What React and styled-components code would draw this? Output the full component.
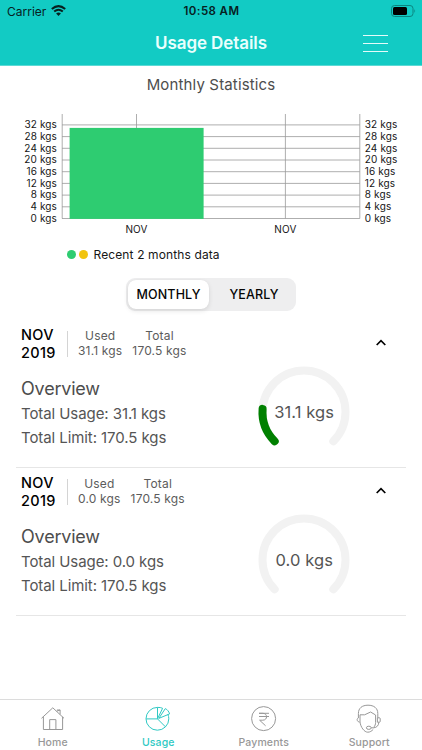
import React from "react";
import styled, { createGlobalStyle } from "styled-components";

const GlobalStyle = createGlobalStyle`
  * { box-sizing: border-box; }
  body { margin: 0; background: #fff; }
  button { font: inherit; letter-spacing: inherit; border: 0; padding: 0; margin: 0; background: none; color: inherit; }
`;

const Screen = styled.div`
  width: 422px;
  height: 750px;
  display: flex;
  flex-direction: column;
  overflow: hidden;
  background: #fff;
  color: #4d4d4d;
  font-family: Inter, "Liberation Sans", sans-serif;
`;

const Header = styled.header`
  height: 66px;
  flex: none;
  background: #12cbc4;
  border-bottom: 1px solid #5cdad5;
`;

const StatusBar = styled.div`
  height: 22px;
  display: grid;
  grid-template-columns: 1fr auto 1fr;
  align-items: center;
  padding: 0 6px 0 7px;
  color: #07211f;
  font-size: 12px;
`;

const Carrier = styled.div`
  display: flex;
  align-items: center;
  gap: 5px;
  letter-spacing: 0;
  svg { display: block; margin-top: -2px; }
`;

const Clock = styled.time`
  font-weight: 600;
  font-size: 11.5px;
  letter-spacing: 0.4px;
`;

const Battery = styled.svg`
  justify-self: end;
  margin-top: -1px;
`;

const NavBar = styled.div`
  height: 43px;
  display: grid;
  grid-template-columns: 1fr auto 1fr;
  align-items: center;
  padding-right: 34px;
  padding-left: 34px;
`;

const NavTitle = styled.h1`
  grid-column: 2;
  margin: -1px 0 0;
  font-size: 17px;
  font-weight: 600;
  letter-spacing: -0.08px;
  color: #e9fffd;
`;

const MenuButton = styled.button`
  justify-self: end;
  width: 25px;
  height: 17px;
  display: flex;
  flex-direction: column;
  justify-content: space-between;
`;

const MenuLine = styled.span`
  height: 1px;
  width: 25px;
  background: #e4fbfa;
`;

const Main = styled.main`
  flex: 1;
  display: flex;
  flex-direction: column;
`;

const ChartTitle = styled.h2`
  margin: 9px 0 0;
  height: 20px;
  line-height: 20px;
  text-align: center;
  font-size: 15px;
  font-weight: 400;
  letter-spacing: 0.15px;
`;

const Chart = styled.svg`
  display: block;
  flex: none;
  margin-top: 10px;
`;

const ChartText = styled.text`
  font-size: 10px;
  fill: #161616;
  letter-spacing: 0.13px;
`;

const Legend = styled.div`
  height: 20px;
  margin-top: 4px;
  padding-left: 67px;
  display: flex;
  align-items: center;
  gap: 3px;
  font-size: 12px;
  letter-spacing: 0.12px;
  color: #161616;
`;

const Dot = styled.span`
  width: 9px;
  height: 9px;
  border-radius: 50%;
  background: ${(p) => p.$color};
`;

const LegendLabel = styled.span`
  margin-left: 2.5px;
`;

const Segmented = styled.div`
  width: 170px;
  height: 33px;
  margin: 14px 0 0 126px;
  padding: 2px;
  display: grid;
  grid-template-columns: 81px 1fr;
  column-gap: 5px;
  border-radius: 9px;
  background: #eeeeef;
`;

const Segment = styled.button`
  border-radius: 8px;
  font-size: 12.5px;
  font-weight: 500;
  letter-spacing: 0.15px;
  color: #050505;
  background: ${(p) => (p.$active ? "#fff" : "transparent")};
  box-shadow: ${(p) => (p.$active ? "0 2px 5px rgba(0,0,0,.1), 0 0 1px rgba(0,0,0,.08)" : "none")};
`;

const Entries = styled.div`
  margin: 9px 16px 0;
`;

const Entry = styled.section`
  height: 148px;
  border-bottom: 1px solid #e6e6e6;
  padding: 5px 5px 0;
`;

const EntryHeader = styled.div`
  height: 38px;
  display: flex;
  align-items: center;
`;

const Period = styled.div`
  width: 47px;
  border-right: 1px solid #d4d4d4;
  height: 26px;
  display: flex;
  flex-direction: column;
  justify-content: center;
  line-height: 18px;
  font-size: 14.5px;
  font-weight: 500;
  letter-spacing: 0.3px;
  color: #000;
`;

const Stat = styled.div`
  margin: -1px 0 0 10px;
  text-align: center;
  font-size: 12px;
  line-height: 14.5px;
  letter-spacing: 0.17px;
  color: #5c5c5c;
`;

const Toggle = styled.button`
  margin: -3px 15px 0 auto;
  display: flex;
`;

const EntryBody = styled.div`
  display: flex;
  justify-content: space-between;
  padding-right: 50px;
`;

const Details = styled.div`
  padding-top: 12px;
  font-size: 15px;
  line-height: 23.5px;
  letter-spacing: -0.08px;
  color: #555;
`;

const Overview = styled.h3`
  margin: 0;
  font-size: 18px;
  line-height: 27px;
  font-weight: 400;
  letter-spacing: -0.2px;
  color: #4d4d4d;
`;

const Line = styled.div`
  white-space: nowrap;
`;

const GaugeSvg = styled.svg`
  display: block;
  margin-top: 2px;
`;

const GaugeText = styled.text`
  font-size: 16.5px;
  letter-spacing: 0.1px;
  fill: #555;
  text-anchor: middle;
`;

const TabBar = styled.nav`
  height: 51px;
  flex: none;
  display: grid;
  grid-template-columns: repeat(4, 1fr);
  border-top: 1px solid #dcdcdc;
`;

const Tab = styled.button`
  display: flex;
  flex-direction: column;
  align-items: center;
  padding-top: 4px;
  color: ${(p) => (p.$active ? "#2fc9c4" : "#989898")};
  font-size: 10.5px;
  font-weight: 500;
  letter-spacing: 0.12px;
  line-height: 14px;
  svg { display: block; fill: none; stroke: currentColor; stroke-width: 1; margin-bottom: 2px; }
`;

const TICKS = [32, 28, 24, 20, 16, 12, 8, 4, 0];
const AXIS_BOTTOM = 113.5;
const STEP = 11.7;

function UsageChart() {
  const y = (v) => AXIS_BOTTOM - (v / 4) * STEP;
  return (
    <Chart width="422" height="135" viewBox="0 0 422 135">
      <g stroke="#999" strokeWidth="0.8">
        {TICKS.map((v) => <line key={v} x1="62" x2="359.8" y1={y(v)} y2={y(v)} />)}
        {[62.2, 136.5, 285.4, 359.8].map((x) => <line key={x} x1={x} x2={x} y1="9" y2={AXIS_BOTTOM} />)}
      </g>
      <rect x="69.6" y="22.9" width="134" height="91" fill="#2ecc71" />
      {TICKS.map((v) => (
        <g key={v}>
          <ChartText x="57" y={y(v) + 3.3} textAnchor="end">{v} kgs</ChartText>
          <ChartText x="364.8" y={y(v) + 3.3}>{v} kgs</ChartText>
        </g>
      ))}
      <ChartText x="136.5" y="128.4" textAnchor="middle">NOV</ChartText>
      <ChartText x="285.4" y="128.4" textAnchor="middle">NOV</ChartText>
    </Chart>
  );
}

function Gauge({ value, limit }) {
  const arc = "M17.7 76.3 A41.5 41.5 0 1 1 76.3 76.3";
  return (
    <GaugeSvg width="94" height="94" viewBox="0 0 94 94" fill="none" strokeLinecap="round" strokeWidth="8">
      <path d={arc} stroke="#f2f2f2" />
      {value > 0 && <path d={arc} stroke="#008000" pathLength="100" strokeDasharray={`${(value / limit) * 100} 200`} />}
      <GaugeText x="47.2" y="53">{value.toFixed(1)} kgs</GaugeText>
    </GaugeSvg>
  );
}

function UsageEntry({ month, year, used, total }) {
  return (
    <Entry>
      <EntryHeader>
        <Period><span>{month}</span><span>{year}</span></Period>
        <Stat>Used<br />{used.toFixed(1)} kgs</Stat>
        <Stat>Total<br />{total} kgs</Stat>
        <Toggle aria-label="Collapse">
          <svg width="10" height="7" viewBox="0 0 10 7" fill="none" stroke="#000" strokeWidth="1.7"><path d="M.7 6 5 1.7 9.3 6" /></svg>
        </Toggle>
      </EntryHeader>
      <EntryBody>
        <Details>
          <Overview>Overview</Overview>
          <Line>Total Usage: {used.toFixed(1)} kgs</Line>
          <Line>Total Limit: {total} kgs</Line>
        </Details>
        <Gauge value={used} limit={total} />
      </EntryBody>
    </Entry>
  );
}

const HomeIcon = () => (
  <svg width="28" height="30" viewBox="0 0 28 30">
    <path d="M2.5 14.3 13.8 3.8 25 14.3M4.4 12.8v12.7h19.2V12.8M10.7 25.5V15.6h6.2v9.9M17.7 7.2l3.4-1.2v4.4M17.9 6h3.2" />
  </svg>
);
const UsageIcon = () => (
  <svg width="28" height="30" viewBox="0 0 28 30">
    <path d="M13.5 3.4A11.4 11.4 0 1 0 24.8 14.8C24.8 13.2 24.5 11.7 23.9 10.4M13.5 3.4V14.9H2.1M13.5 14.9 21.5 22.9M14.8 14.4 25.6 9.9C24.9 7.5 23.4 5.6 21.3 4.6ZM13.8 14.2 18.6 4.3C17.2 3.6 15.5 3.3 13.5 3.4" />
  </svg>
);
const PaymentsIcon = () => (
  <svg width="28" height="30" viewBox="0 0 28 30">
    <circle cx="13.6" cy="14.6" r="12" />
    <path d="M9 9.3h10M9 12.5h10M9 9.3h3.8c5 0 5 6.9 0 6.9H9.6l6 5.6" />
  </svg>
);
const SupportIcon = () => (
  <svg width="28" height="30" viewBox="0 0 28 30">
    <path d="M3.4 14V9.5C3.4 4.2 7 1.2 13 1.2S22.8 4.2 22.8 9.5V14M3.4 14c-2 .4-1.6 3.8 1.2 4.2M22.8 13.8h1.6q.8 0 .8.8v2.8q0 .8-.8.8h-2v-4.4M5 14v-3.2h4.6L15.6 8l5 3v7.5c0 1.8-.7 3.4-1.8 4.8M5 14v4c.6 5 4.2 10.2 7.8 10.2 2.2 0 4-1.2 5.4-2.8M23.8 18.2c0 3.2-2 5.3-5 5.6h-2.6" />
    <ellipse cx="13.8" cy="23.8" rx="2.4" ry="1.6" />
  </svg>
);

const TABS = [
  { label: "Home", Icon: HomeIcon },
  { label: "Usage", Icon: UsageIcon, active: true },
  { label: "Payments", Icon: PaymentsIcon },
  { label: "Support", Icon: SupportIcon },
];

export default function App() {
  return (
    <>
      <GlobalStyle />
      <Screen>
        <Header>
          <StatusBar>
            <Carrier>
              Carrier
              <svg width="15" height="11" viewBox="0 0 15 11" fill="none" stroke="#07211f" strokeWidth="2">
                <path d="M.8 4Q7.5-1.8 14.2 4M3.2 6.6Q7.5 2.9 11.8 6.6" />
                <path d="M7.5 11 5.1 8.5Q7.5 6.5 9.9 8.5Z" fill="#07211f" stroke="none" />
              </svg>
            </Carrier>
            <Clock>10:58 AM</Clock>
            <Battery width="25" height="12" viewBox="0 0 25 12">
              <rect x=".5" y=".5" width="21.5" height="11" rx="3" fill="none" stroke="#0b8580" />
              <rect x="2" y="2" width="14" height="8" rx="1.5" fill="#000" />
              <path d="M23.4 4q1.6 2 0 4Z" fill="#0b8580" />
            </Battery>
          </StatusBar>
          <NavBar>
            <NavTitle>Usage Details</NavTitle>
            <MenuButton aria-label="Menu"><MenuLine /><MenuLine /><MenuLine /></MenuButton>
          </NavBar>
        </Header>
        <Main>
          <ChartTitle>Monthly Statistics</ChartTitle>
          <UsageChart />
          <Legend>
            <Dot $color="#2ecc71" />
            <Dot $color="#f1c40f" />
            <LegendLabel>Recent 2 months data</LegendLabel>
          </Legend>
          <Segmented>
            <Segment $active>MONTHLY</Segment>
            <Segment>YEARLY</Segment>
          </Segmented>
          <Entries>
            <UsageEntry month="NOV" year="2019" used={31.1} total={170.5} />
            <UsageEntry month="NOV" year="2019" used={0} total={170.5} />
          </Entries>
        </Main>
        <TabBar>
          {TABS.map(({ label, Icon, active }) => (
            <Tab key={label} $active={active}><Icon />{label}</Tab>
          ))}
        </TabBar>
      </Screen>
    </>
  );
}
